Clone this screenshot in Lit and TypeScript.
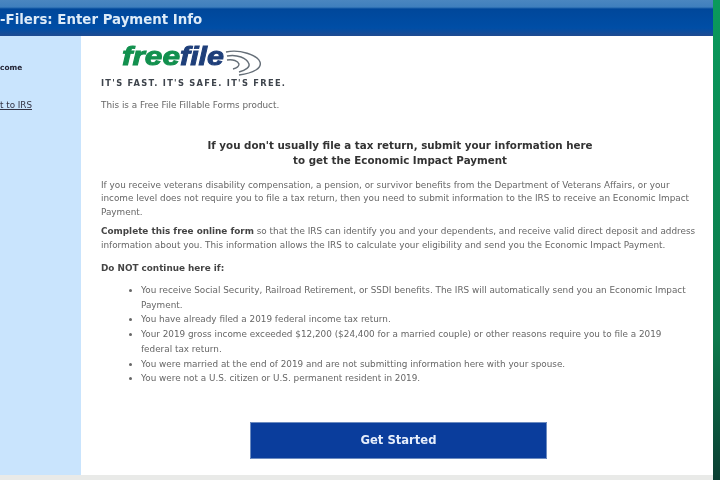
import { LitElement, html, css } from "lit";
import { customElement } from "lit/decorators.js";

@customElement("app-root")
export class AppRoot extends LitElement {
  static styles = css`
    :host { display: block; width: 720px; height: 480px; overflow: hidden; font-family: "DejaVu Sans", Verdana, sans-serif; background: #fff; }
    .page { width: 720px; height: 480px; display: flex; overflow: hidden; background: #e9eae8; }
    .left { width: 713px; flex: none; display: flex; flex-direction: column; height: 475px; }
    .edge { flex: 1; background: linear-gradient(#0a9a5c, #0c7a4c 70%, #0b3f33); height: 480px; }
    .hdr { height: 36px; flex: none; background: linear-gradient(#4a86c0 0, #3f7fbd 7px, #00479a 9px, #004ea6 28px, #1f4b91 36px); color: #dcebf8; font-weight: 700; font-size: 13.35px; display: flex; align-items: center; padding-top: 2px; box-sizing: border-box; overflow: hidden; }
    .hdr span { filter: blur(0.6px); }
    .body { flex: 1; display: flex; min-height: 0; }
    .side { width: 81px; flex: none; background: #c9e4fd; font-size: 8.75px; color: #223; padding-top: 27px; box-sizing: border-box; display: flex; flex-direction: column; gap: 27px; overflow: hidden; }
    .side b, .side a { filter: blur(0.7px); display: block; line-height: 10px; }
    .side b { font-size: 7.4px; }
    .side a { color: #334; text-decoration: underline; }
    .main { flex: 1; background: #fff; padding: 7px 0 0 20px; box-sizing: border-box; color: #666; font-size: 8.86px; line-height: 13.5px; white-space: nowrap; }
    .txt { filter: blur(0.7px); margin-top: -1px; }
    .logo { display: block; margin-left: 19px; filter: blur(0.5px); }
    .tag { font-weight: 700; font-size: 8.3px; letter-spacing: 1.28px; color: #3f454d; margin-top: 1px; line-height: 12px; }
    p { margin: 0; }
    .ln { display: block; }
    .ff { margin-top: 10px; color: #666; }
    h1 { margin: 25px 0 11px; font-size: 10.3px; line-height: 15px; color: #333; text-align: center; font-weight: 700; width: 592px; padding-left: 6px; box-sizing: border-box; }
    .para { margin-bottom: 6px; }
    .para b { color: #444; }
    .dn { color: #444; margin-top: 9.5px; }
    ul { margin: 8px 0 0; padding: 0 0 0 40px; line-height: 14.7px; }
    li { margin: 0; }
    .cta { display: flex; justify-content: flex-start; margin: 36px 0 0 149px; }
    button { width: 297px; height: 37px; border: 0; border-radius: 1px; background: #0a3d9c; color: #e6eefb; font: 700 11.6px "DejaVu Sans", sans-serif; filter: blur(0.5px); box-shadow: 0 0 0 1px #6d8cc0 inset; }
  `;

  render() {
    return html`<div class="page">
      <div class="left">
        <div class="hdr"><span>-Filers: Enter Payment Info</span></div>
        <div class="body">
          <div class="side"><b>come</b><a href="#">t to IRS</a></div>
          <div class="main">
            <svg class="logo" width="144" height="34" viewBox="0 0 144 34">
              <text x="2" y="22" font-family="Liberation Sans" font-style="italic" font-weight="700" font-size="25" fill="#12904e" stroke="#12904e" stroke-width=".9" textLength="58" lengthAdjust="spacingAndGlyphs">free</text>
              <text x="60" y="22" font-family="Liberation Sans" font-style="italic" font-weight="700" font-size="25" fill="#1f3f7a" stroke="#1f3f7a" stroke-width=".9" textLength="44" lengthAdjust="spacingAndGlyphs">file</text>
              <g fill="none" stroke="#4a5560" stroke-width="1.4" opacity=".85">
                <path d="M106 9c14-3 31 3 34 10 2 6-6 11-21 13"/>
                <path d="M107 13c10-2 20 2 22 8 1 3-3 6-10 8"/>
                <path d="M107 17c6-1 11 1 12 4 0 2-2 4-6 5"/>
              </g>
            </svg>
            <div class="txt">
              <div class="tag">IT'S FAST. IT'S SAFE. IT'S FREE.</div>
              <p class="ff">This is a Free File Fillable Forms product.</p>
              <h1>If you don't usually file a tax return, submit your information here<br />to get the Economic Impact Payment</h1>
              <p class="para">
                <span class="ln">If you receive veterans disability compensation, a pension, or survivor benefits from the Department of Veterans Affairs, or your</span>
                <span class="ln">income level does not require you to file a tax return, then you need to submit information to the IRS to receive an Economic Impact</span>
                <span class="ln">Payment.</span>
              </p>
              <p class="para">
                <span class="ln"><b>Complete this free online form</b> so that the IRS can identify you and your dependents, and receive valid direct deposit and address</span>
                <span class="ln">information about you. This information allows the IRS to calculate your eligibility and send you the Economic Impact Payment.</span>
              </p>
              <p class="dn"><b>Do NOT continue here if:</b></p>
              <ul>
                <li><span class="ln">You receive Social Security, Railroad Retirement, or SSDI benefits. The IRS will automatically send you an Economic Impact</span><span class="ln">Payment.</span></li>
                <li>You have already filed a 2019 federal income tax return.</li>
                <li><span class="ln">Your 2019 gross income exceeded $12,200 ($24,400 for a married couple) or other reasons require you to file a 2019</span><span class="ln">federal tax return.</span></li>
                <li>You were married at the end of 2019 and are not submitting information here with your spouse.</li>
                <li>You were not a U.S. citizen or U.S. permanent resident in 2019.</li>
              </ul>
            </div>
            <div class="cta"><button>Get Started</button></div>
          </div>
        </div>
      </div>
      <div class="edge"></div>
    </div>`;
  }
}
